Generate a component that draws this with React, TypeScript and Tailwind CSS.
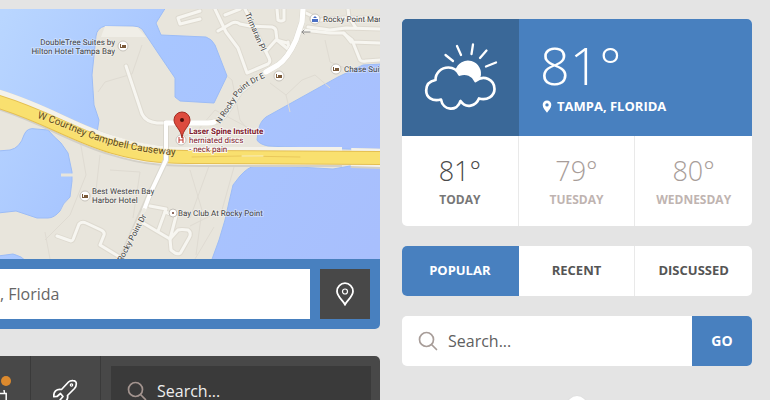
import type { ReactNode } from "react";

const FORECAST = [
  { day: "TODAY", temp: "81°", tempColor: "text-[#4a4a4a]", dayColor: "text-[#777777]" },
  { day: "TUESDAY", temp: "79°", tempColor: "text-[#a89d99]", dayColor: "text-[#bfb4b1]" },
  { day: "WEDNESDAY", temp: "80°", tempColor: "text-[#a89d99]", dayColor: "text-[#bfb4b1]" },
];

const TABS = ["POPULAR", "RECENT", "DISCUSSED"];

// local streets, drawn twice: a wide darker casing, then a light fill
const STREETS = [
  "M215 9L226 32L238 48L247 73L268 64Q271 62 269 58L245 9",
  "M218 31L232 23Q236 21 240 24L250 26L272 27Q276 28 276 32L277 40L289 50L288 42",
  "M267 50L276 40L287 43",
  "M225 15L240 9",
  "M277 9L278 20Q281 22 284 20L284 9",
  "M303 30L330 33L343 33L352 40L360 60Q362 62 366 61L380 60",
  "M308 27L330 30L346 28L380 29",
  "M344 33L351 42L380 43",
  "M306 13L320 20L344 18L380 18",
  "M356 28L349 17L348 9",
  "M200 11L178 18L180 24L200 19",
  "M126 66L142 114Q146 122 157 123L166 123",
  "M57 236L71 241Q73 241 74 237L79 224Q82 221 86 223L101 230Q105 232 104 235L100 245L118 256",
  "M150 206L166 209L158 231",
  "M143 223L170 239L176 216L165 212",
  "M170 239L178 230Q181 229 188 230Q192 233 189 238L181 252Q180 255 175 253L171 250Z",
];

// parcel boundaries
const PARCELS = [
  "M98 92L105 82L132 74L142 45",
  "M180 138L198 130L215 110L258 133",
  "M227 76L232 80L240 120L250 132",
  "M270 83L286 95L302 80L315 75L330 88",
  "M286 95L290 112",
  "M325 40L330 62L345 68",
  "M190 170L202 210L196 255",
  "M209 166L190 218",
  "M234 167L222 210L190 226",
  "M214 227L195 259",
  "M80 140L86 175L70 215L45 240",
  "M45 232L50 259",
  "M100 155L96 190M110 170L140 172L133 218",
];

function Poi({ x, y, r = 5, children }: { x: number; y: number; r?: number; children?: ReactNode }) {
  return (
    <g>
      <circle cx={x} cy={y} r={r} fill="#fff" stroke="#c6c2ba" strokeWidth="1" />
      {children ?? (
        <g fill="#7a5a3a">
          <rect x={x - 3} y={y - 2} width="1" height="4" />
          <rect x={x - 1} y={y - 1} width="4" height="2" />
          <rect x={x - 3} y={y + 1} width="6" height="1" />
        </g>
      )}
    </g>
  );
}

function TampaMap() {
  return (
    <svg
      viewBox="0 9 380 250"
      preserveAspectRatio="xMidYMid slice"
      textRendering="geometricPrecision"
      className="block aspect-[38/25] w-full font-['Roboto',sans-serif]"
      role="img"
      aria-label="Map of Rocky Point, Tampa"
    >
      <defs>
        <linearGradient id="water" gradientUnits="userSpaceOnUse" x1="0" y1="20" x2="380" y2="240">
          <stop offset="0" stopColor="#b9d6ff" />
          <stop offset="0.35" stopColor="#a8c6ff" />
          <stop offset="1" stopColor="#a8bffd" />
        </linearGradient>
        <path id="causeway-label" d="M37 118C75 129 98 149 172 155L200 156" />
        <path id="drive-label" d="M220 124L236 100Q242 88 258 81L285 68" />
        <path id="trimaran-label" d="M245 14L270 72" />
        <path id="south-label" d="M122 262L154 202" />
      </defs>

      <rect x="0" y="9" width="380" height="250" fill="#e8e5dc" />

      <g fill="url(#water)" stroke="#9cbcf6" strokeWidth="1" strokeLinejoin="round">
        <path d="M-2 7L166 7L156 23L161 35L206 37Q212 39 215 45L227 76L214 103L180 101L175 97L175 78L158 53L142 29Q139 26 133 26L105 26Q97 28 96 36L92 75L94 105L99 120L97 133L-2 93Z" />
        <path d="M-2 151L10 150Q20 148 24 135Q27 127 36 129L48 130Q54 137 61 143L68 153L72 172L72 181L70 197Q62 204 60 211Q54 218 48 218L37 218L16 211L-2 213Z" />
        <path d="M-2 256L13 254Q22 256 27 262L-2 262Z" />
        <path d="M382 64L363 65L338 77L266 117Q259 122 258 133L257 140Q259 144 268 146L310 148L382 150Z" />
        <path d="M382 168L350 166L333 169L280 166L255 166Q248 167 240 176L233 185L229 202L225 220L219 240L211 262L382 262Z" />
      </g>
      <path d="M105 26L137 27L146 37L101 37Z" fill="#f0eee7" />
      <path d="M61 175L73 175" stroke="#e8e5dc" strokeWidth="3" />

      <g fill="none" stroke="#dfdbd2" strokeWidth="1">
        {PARCELS.map((d) => <path key={d} d={d} />)}
      </g>

      <g fill="none" strokeLinejoin="round" strokeLinecap="round">
        <g stroke="#dedad0" strokeWidth="5">
          {STREETS.map((d) => <path key={d} d={d} />)}
        </g>
        <g stroke="#f7f6f1" strokeWidth="3">
          {STREETS.map((d) => <path key={d} d={d} />)}
        </g>

        {/* causeway shoulder, then the yellow carriageway */}
        <path d="M-4 99C46 114 72 134 113 146C148 157 170 157 200 157L342 157M351 158L384 159" stroke="#d3d0c8" strokeWidth="20" strokeLinecap="butt" />
        <path d="M-4 98C46 113 72 133 113 145C148 156 170 156 200 156L342 156M351 157L384 158" stroke="#f4f2ea" strokeWidth="18" strokeLinecap="butt" />
        <path d="M-4 101C46 116 72 135 113 147C148 157 170 157 200 157L384 158" stroke="#e4bf52" strokeWidth="14" />
        <path d="M-4 101C46 116 72 135 113 147C148 157 170 157 200 157L384 158" stroke="#f9e06f" strokeWidth="12" />
        <path d="M192 157L241 156L300 157" stroke="#e9c85c" strokeWidth="1" />
        <path d="M242 156L263 156" stroke="#fdf6c8" strokeWidth="1" />

        <path d="M303 9L302 22L296 40Q288 58 278 65L262 74L240 92L224 116Q218 123 208 123L166 123L166 160L150 194L120 262" stroke="#dad7ce" strokeWidth="6" />
        <path d="M303 9L302 22L296 40Q288 58 278 65L262 74L240 92L224 116Q218 123 208 123L166 123" stroke="#eceae2" strokeWidth="5" />
        <path d="M303 9L302 22L296 40Q288 58 278 65L266 72M214 122Q212 123 208 123L166 123" stroke="#ffffff" strokeWidth="5" />
        <path d="M166 123L166 160L150 194L144 210" stroke="#ffffff" strokeWidth="4" />
        <path d="M144 210L120 262" stroke="#eceae2" strokeWidth="4" />
        <path d="M310 32L302 32M304 30L302 32L304 34" stroke="#8f8f8f" strokeWidth="1" />
      </g>

      <Poi x={123} y={46} />
      <Poi x={279} y={76} />
      <Poi x={336} y={69} />
      <Poi x={85} y={196} />
      <Poi x={315} y={19}>
        <path d="M312 19h6v3h-6zM313 18l2-2 2 2z" fill="#4a6fc4" />
      </Poi>
      <Poi x={173} y={213} r={4}>
        <circle cx="173" cy="213" r="1" fill="#6b3b2c" />
      </Poi>
      <Poi x={181} y={140}>
        <path d="M179 137v6M183 137v6M179 140h4" stroke="#c0392f" strokeWidth="1" fill="none" />
      </Poi>

      <g fill="#444444" stroke="#ffffff" strokeOpacity="0.35" strokeWidth="2" paintOrder="stroke" strokeLinejoin="round" fontSize="8">
        <text x="115" y="45" textAnchor="end">DoubleTree Suites by</text>
        <text x="115" y="54" textAnchor="end">Hilton Hotel Tampa Bay</text>
        <text x="323" y="22">Rocky Point Market</text>
        <text x="344" y="72">Chase Suite Hotel</text>
        <text x="92" y="194">Best Western Bay</text>
        <text x="92" y="203">Harbor Hotel</text>
        <text x="178" y="216">Bay Club At Rocky Point</text>
        <text><textPath href="#trimaran-label">Trimaran Pl</textPath></text>
        <text><textPath href="#drive-label">N Rocky Point Dr E</textPath></text>
        <text><textPath href="#south-label">Rocky Point Dr</textPath></text>
        <text fontSize="10" fill="#5e4a1c" stroke="#fbeaa0"><textPath href="#causeway-label">W Courtney Campbell Causeway</textPath></text>
        <g fill="#80202c" strokeOpacity="0.8">
          <text x="189" y="134" fontWeight="700">Laser Spine Institute</text>
          <text x="189" y="143">herniated discs</text>
          <text x="189" y="152">- neck pain</text>
        </g>
      </g>

      <path d="M182 138C181 129 174 126 174 120A8 8 0 0 1 190 120C190 126 183 129 182 138Z" fill="#dd4b3e" stroke="#a32c22" strokeWidth="1" />
      <circle cx="182" cy="120" r="2" fill="#4d0f0b" />
    </svg>
  );
}

function SearchIcon({ className }: { className: string }) {
  return (
    <svg viewBox="0 0 20 20" className={className} fill="none" stroke="currentColor" strokeWidth="1.7" strokeLinecap="round" aria-hidden="true">
      <circle cx="8.5" cy="8.5" r="7" />
      <path d="M13.5 13.5L18.5 18.5" />
    </svg>
  );
}

function CloudSunIcon() {
  return (
    <svg viewBox="0 0 74 70" className="h-[70px] w-[74px]" fill="none" stroke="#fff" strokeWidth="2.7" strokeLinecap="round" strokeLinejoin="round" aria-hidden="true">
      <path d="M21.5 12L29 18M33 3L37 12M49 1.500L47.500 11M62.500 7.500L56 15M72 19.500L62 23.500" strokeWidth="2.300" />
      <path d="M31.500 27A12.600 12.600 0 0 1 56.500 34L51.500 38C49 32 42 29 35.500 31.500Z" fill="#fff" stroke="none" />
      <path d="M11.500 37C11.500 30 17 24.500 24.500 24.500C30 24.500 33 27 35.500 31.500C42 29 49 32 51.500 38C60 31 70.500 37 70.500 46C70.500 53 63 58 55 55.500C52 63 42 66 36.500 58C33 69 19 68 17 56.500C8 59 2.200 54 2.200 47.500C2.200 41 6 38 11.500 37Z" />
    </svg>
  );
}

function WeatherCard() {
  return (
    <section className="shrink-0 overflow-hidden rounded-[5px] bg-white">
      <div className="flex h-[117px] bg-[#4880bf] text-white">
        <div className="flex w-[117px] shrink-0 items-center justify-center bg-[#3a6898]">
          <CloudSunIcon />
        </div>
        <div className="flex flex-col pt-[18px] pl-[21px]">
          <div className="text-[52px] leading-[56px] font-light">81°</div>
          <div className="flex items-center gap-[5px] pl-0.5 text-[13px] leading-[26px] font-bold">
            <svg viewBox="0 0 10 13" className="h-[13px] w-[10px]" fill="currentColor" aria-hidden="true">
              <path fillRule="evenodd" d="M5 0.500A4.300 4.300 0 0 1 9.300 5C9.300 8 6.500 10.500 5 12.800C3.500 10.500 0.700 8 0.700 5A4.300 4.300 0 0 1 5 0.500ZM5 3.200A1.700 1.700 0 1 0 5 6.600A1.700 1.700 0 1 0 5 3.200Z" />
            </svg>
            TAMPA, FLORIDA
          </div>
        </div>
      </div>
      <ul className="grid h-[90px] grid-cols-3 divide-x divide-[#e9e9e9]">
        {FORECAST.map((f) => (
          <li key={f.day} className="flex flex-col items-center pt-[17px]">
            <span className={`text-[27px] leading-9 font-light ${f.tempColor}`}>{f.temp}</span>
            <span className={`text-xs leading-[22px] font-bold ${f.dayColor}`}>{f.day}</span>
          </li>
        ))}
      </ul>
    </section>
  );
}

function Tabs() {
  return (
    <div role="tablist" className="grid h-[50px] shrink-0 grid-cols-3 divide-x divide-[#e9e9e9] overflow-hidden rounded-[5px] bg-white text-[13px] font-bold">
      {TABS.map((tab, i) => (
        <button
          key={tab}
          type="button"
          role="tab"
          aria-selected={i === 0}
          className={i === 0 ? "border-[#4880bf]! bg-[#4880bf] text-white" : "text-[#555555]"}
        >
          {tab}
        </button>
      ))}
    </div>
  );
}

export default function App() {
  return (
    <main className="flex h-screen gap-[22px] overflow-hidden bg-[#e4e4e4] pr-[18px] font-['Open_Sans',sans-serif]">
      <div className="flex min-w-0 flex-1 flex-col gap-[27px] pt-[9px]">
        <section className="shrink-0 overflow-hidden rounded-br-[5px] bg-[#4880bf]">
          <TampaMap />
          <form className="flex gap-[10px] py-[10px] pr-[10px]">
            <input
              aria-label="Location"
              defaultValue=", Florida"
              className="h-[50px] min-w-0 flex-1 bg-white text-base text-[#666666] outline-none"
            />
            <button type="button" aria-label="Find location" className="flex size-[50px] items-center justify-center bg-[#484848]">
              <svg viewBox="0 0 20 24" className="h-6 w-5" fill="none" stroke="#fff" aria-hidden="true">
                <path d="M10 22.500C8 18.500 2 14.500 2 9.200A8 8 0 0 1 18 9.200C18 14.500 12 18.500 10 22.500Z" strokeWidth="1.800" />
                <circle cx="10" cy="9.500" r="2.500" strokeWidth="1.200" />
              </svg>
            </button>
          </form>
        </section>

        <nav className="flex h-[70px] shrink-0 rounded-tr-[5px] bg-[#484848]">
          <button type="button" aria-label="Orders" className="flex w-[31px] items-center border-r border-[#3a3a3a]">
            <svg viewBox="0 0 14 30" className="h-[30px] w-[14px]" fill="none" stroke="#fff" strokeWidth="1.500" aria-hidden="true">
              <path d="M0 17.500L6.200 17.500L6.200 28L0 28M4.500 17L4 14" />
              <circle cx="6" cy="5" r="5" fill="#dc8a2e" stroke="none" />
            </svg>
          </button>
          <button type="button" aria-label="Settings" className="flex w-[70px] items-center justify-center border-r border-[#3a3a3a]">
            <svg viewBox="0 0 26 26" className="size-[26px]" fill="none" stroke="#fff" strokeWidth="1.700" strokeLinejoin="round" aria-hidden="true">
              <path d="M8.500 11.500L15.500 4Q17 2.500 20 2.700Q23.500 2.700 23.300 6Q23.300 8.500 21.500 10.500L14.500 17.500C15.500 21.500 12 25.500 7 25L7 22L10 18.500L7.500 15.500L4 18.500L0.800 18.700C0.300 14 3.500 10.500 8.500 11.500Z" />
              <circle cx="18.500" cy="7" r="1.200" strokeWidth="1.200" />
            </svg>
          </button>
          <label className="m-[10px] mr-[9px] flex min-w-0 flex-1 items-center gap-[10px] bg-[#3a3a3a] pl-4">
            <SearchIcon className="size-5 shrink-0 text-[#a3948f]" />
            <input
              aria-label="Search site"
              placeholder="Search..."
              className="min-w-0 flex-1 bg-transparent text-base text-white outline-none placeholder:text-[#eeeeee]"
            />
          </label>
        </nav>
      </div>

      <div className="flex w-[350px] shrink-0 flex-col gap-5 pt-[19px]">
        <WeatherCard />
        <Tabs />
        <form className="flex h-[50px] shrink-0 overflow-hidden rounded-[5px] bg-white">
          <label className="flex min-w-0 flex-1 items-center gap-[10px] pl-4">
            <SearchIcon className="size-5 shrink-0 text-[#a89d99]" />
            <input
              aria-label="Search"
              placeholder="Search..."
              className="min-w-0 flex-1 bg-transparent text-base text-[#606060] outline-none placeholder:text-[#606060]"
            />
          </label>
          <button type="button" className="w-[60px] bg-[#4880bf] text-sm font-bold text-white">GO</button>
        </form>
        <div className="mt-[10px] size-5 shrink-0 self-center rounded-full bg-white shadow" />
      </div>
    </main>
  );
}
